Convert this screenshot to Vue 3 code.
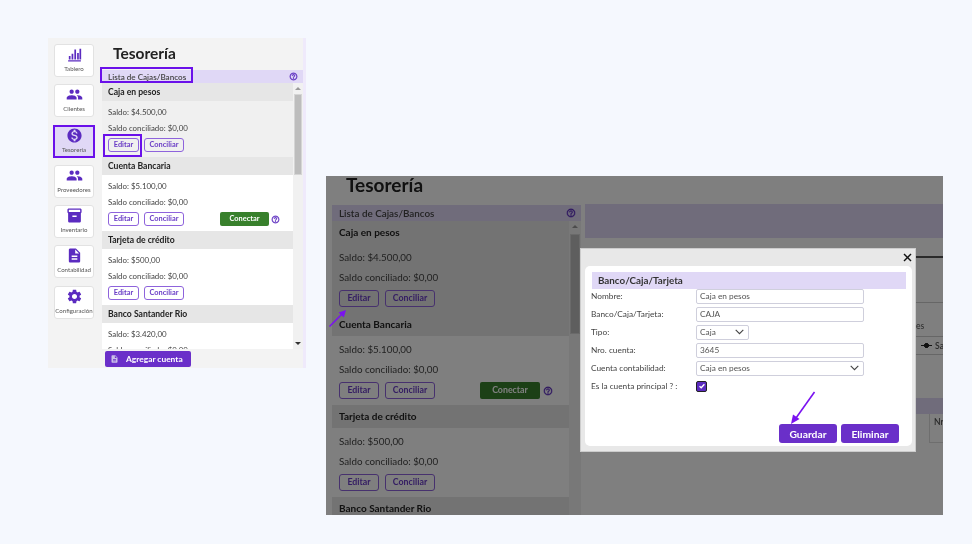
<script setup>
const icons = {
  chart: 'M3 20h18v2H3zM4 14h2.4v5H4zM7.9 11h2.4v8H7.9zM11.8 5h2.4v14h-2.4zM15.7 10h2.4v9h-2.4zM19 4h2.4v15H19z',
  people: 'M16 11c1.66 0 2.99-1.34 2.99-3S17.66 5 16 5c-1.66 0-3 1.34-3 3s1.34 3 3 3zm-8 0c1.66 0 2.99-1.34 2.99-3S9.66 5 8 5C6.34 5 5 6.34 5 8s1.34 3 3 3zm0 2c-2.33 0-7 1.17-7 3.5V19h14v-2.5c0-2.33-4.67-3.5-7-3.5zm8 0c-.29 0-.62.02-.97.05 1.16.84 1.97 1.97 1.97 3.45V19h6v-2.5c0-2.33-4.67-3.5-7-3.5z',
  money: 'M12 2C6.48 2 2 6.48 2 12s4.48 10 10 10 10-4.48 10-10S17.52 2 12 2zm1.41 16.09V20h-2.67v-1.93c-1.71-.36-3.16-1.46-3.27-3.4h1.96c.1 1.05.82 1.87 2.65 1.87 1.96 0 2.4-.98 2.4-1.59 0-.83-.44-1.61-2.67-2.14-2.48-.6-4.18-1.62-4.18-3.67 0-1.72 1.39-2.84 3.11-3.21V4h2.67v1.95c1.86.45 2.79 1.86 2.85 3.39H14.3c-.05-1.11-.64-1.87-2.22-1.87-1.5 0-2.4.68-2.4 1.64 0 .84.65 1.39 2.67 1.91s4.18 1.39 4.18 3.91c-.01 1.83-1.38 2.83-3.12 3.16z',
  box: 'M20 2H4c-1 0-2 .9-2 2v3.01c0 .72.43 1.34 1 1.69V20c0 1.1 1.1 2 2 2h14c.9 0 2-.9 2-2V8.7c.57-.35 1-.97 1-1.69V4c0-1.1-1-2-2-2zm-5 12H9v-2h6v2zm5-7H4V4h16v3z',
  doc: 'M14 2H6c-1.1 0-1.99.9-1.99 2L4 20c0 1.1.89 2 1.99 2H18c1.1 0 2-.9 2-2V8l-6-6zm2 16H8v-2h8v2zm0-4H8v-2h8v2zm-3-5V3.5L18.5 9H13z',
  gear: 'M19.14 12.94c.04-.3.06-.61.06-.94 0-.32-.02-.64-.07-.94l2.03-1.58c.18-.14.23-.41.12-.61l-1.92-3.32c-.12-.22-.37-.29-.59-.22l-2.39.96c-.5-.38-1.03-.7-1.62-.94l-.36-2.54c-.04-.24-.24-.41-.48-.41h-3.84c-.24 0-.43.17-.47.41l-.36 2.54c-.59.24-1.13.57-1.62.94l-2.39-.96c-.22-.08-.47 0-.59.22L2.74 8.87c-.12.21-.08.47.12.61l2.03 1.58c-.05.3-.09.63-.09.94s.02.64.07.94l-2.03 1.58c-.18.14-.23.41-.12.61l1.92 3.32c.12.22.37.29.59.22l2.39-.96c.5.38 1.03.7 1.62.94l.36 2.54c.05.24.24.41.48.41h3.84c.24 0 .44-.17.47-.41l.36-2.54c.59-.24 1.13-.56 1.62-.94l2.39.96c.22.08.47 0 .59-.22l1.92-3.32c.12-.22.07-.47-.12-.61l-2.01-1.58zM12 15.6c-1.98 0-3.6-1.62-3.6-3.6s1.62-3.6 3.6-3.6 3.6 1.62 3.6 3.6-1.62 3.6-3.6 3.6z',
  help: 'M11 18h2v-2h-2v2zm1-16C6.48 2 2 6.48 2 12s4.48 10 10 10 10-4.48 10-10S17.52 2 12 2zm0 18c-4.41 0-8-3.59-8-8s3.59-8 8-8 8 3.59 8 8-3.59 8-8 8zm0-14c-2.21 0-4 1.79-4 4h2c0-1.1.9-2 2-2s2 .9 2 2c0 2-3 1.75-3 5h2c0-2.25 3-2.5 3-5 0-2.21-1.79-4-4-4z'
}

const navItems = [
  { label: 'Tablero', icon: icons.chart },
  { label: 'Clientes', icon: icons.people },
  { label: 'Tesorería', icon: icons.money, active: true },
  { label: 'Proveedores', icon: icons.people },
  { label: 'Inventario', icon: icons.box },
  { label: 'Contabilidad', icon: icons.doc },
  { label: 'Configuración', icon: icons.gear }
]

const accounts = [
  { name: 'Caja en pesos', saldo: '$4.500,00', selected: true },
  { name: 'Cuenta Bancaria', saldo: '$5.100,00', connect: true },
  { name: 'Tarjeta de crédito', saldo: '$500,00' },
  { name: 'Banco Santander Rio', saldo: '$3.420,00' }
]

const formRows = [
  { label: 'Nombre:', value: 'Caja en pesos' },
  { label: 'Banco/Caja/Tarjeta:', value: 'CAJA' },
  { label: 'Tipo:', value: 'Caja', select: true, small: true },
  { label: 'Nro. cuenta:', value: '3645' },
  { label: 'Cuenta contabilidad:', value: 'Caja en pesos', select: true }
]
</script>

<template>
  <div class="page">
    <!-- captura 1: listado -->
    <section class="shot shot--list">
      <aside class="sidebar">
        <a v-for="item in navItems" :key="item.label" class="nav-card" :class="{ 'nav-card--active': item.active }">
          <svg class="nav-card__icon" viewBox="0 0 24 24"><path :d="item.icon" /></svg>
          <span>{{ item.label }}</span>
        </a>
      </aside>
      <div class="main">
        <h1 class="title">Tesorería</h1>
        <div class="bar">
          <span>Lista de Cajas/Bancos</span>
          <svg class="help" viewBox="0 0 24 24"><path :d="icons.help" /></svg>
          <i class="mark mark--bar"></i>
        </div>
        <div class="list">
          <div class="items">
            <div v-for="(acc, i) in accounts" :key="acc.name" class="item" :class="{ 'item--selected': acc.selected }">
              <div class="item__head">{{ acc.name }}</div>
              <div class="item__body">
                <p>Saldo: {{ acc.saldo }}</p>
                <p>Saldo conciliado: $0,00</p>
                <div class="item__actions">
                  <button class="btn-outline">Editar<i v-if="i === 0" class="mark mark--edit"></i></button>
                  <button class="btn-outline btn-outline--wide">Conciliar</button>
                  <template v-if="acc.connect">
                    <button class="btn-connect">Conectar</button>
                    <svg class="help help--connect" viewBox="0 0 24 24"><path :d="icons.help" /></svg>
                  </template>
                </div>
              </div>
            </div>
          </div>
          <div class="scrollbar">
            <i class="arrow arrow--up"></i>
            <i class="thumb"></i>
            <i class="arrow arrow--down"></i>
          </div>
        </div>
        <div class="footer">
          <button class="btn-add">
            <svg viewBox="0 0 24 24"><path :d="icons.doc" /></svg>
            Agregar cuenta
          </button>
        </div>
      </div>
      <div class="edge"></div>
    </section>

    <!-- captura 2: modal de edicion -->
    <section class="shot shot--modal">
      <h1 class="title">Tesorería</h1>
      <div class="columns">
        <div class="left-col">
          <div class="bar">
            <span>Lista de Cajas/Bancos</span>
            <svg class="help" viewBox="0 0 24 24"><path :d="icons.help" /></svg>
          </div>
          <div class="list">
            <div class="items">
              <div v-for="acc in accounts" :key="acc.name" class="item" :class="{ 'item--selected': acc.selected }">
                <div class="item__head">{{ acc.name }}</div>
                <div class="item__body">
                  <p>Saldo: {{ acc.saldo }}</p>
                  <p>Saldo conciliado: $0,00</p>
                  <div class="item__actions">
                    <button class="btn-outline">Editar</button>
                    <button class="btn-outline btn-outline--wide">Conciliar</button>
                    <template v-if="acc.connect">
                      <button class="btn-connect">Conectar</button>
                      <svg class="help help--connect" viewBox="0 0 24 24"><path :d="icons.help" /></svg>
                    </template>
                  </div>
                </div>
              </div>
            </div>
            <div class="scrollbar">
              <i class="arrow arrow--up"></i>
              <i class="thumb"></i>
            </div>
          </div>
        </div>
        <div class="behind">
          <div class="behind__bar"></div>
          <div class="behind__rule"></div>
          <div class="behind__soft"></div>
          <div class="behind__note">es</div>
          <div class="behind__legend"><i class="dot"></i><span>Sa</span></div>
          <div class="behind__thead"></div>
          <div class="behind__cell"><span>Nr</span></div>
        </div>
      </div>

      <div class="backdrop"></div>

      <div class="modal">
        <button class="modal__close" aria-label="Close">
          <svg width="9" height="9" viewBox="0 0 9 9" stroke="#111" stroke-width="1.4" fill="none">
            <line x1="1" y1="1" x2="8" y2="8" />
            <line x1="8" y1="1" x2="1" y2="8" />
          </svg>
        </button>
        <div class="modal__content">
          <h2 class="modal__title">Banco/Caja/Tarjeta</h2>
          <div v-for="row in formRows" :key="row.label" class="form-row">
            <label>{{ row.label }}</label>
            <div class="field" :class="{ 'field--small': row.small }">
              <span>{{ row.value }}</span>
              <svg v-if="row.select" width="9" height="6" viewBox="0 0 9 6" fill="none" stroke="#444" stroke-width="1.1">
                <polyline points="0.7,0.8 4.5,4.6 8.3,0.8" />
              </svg>
            </div>
          </div>
          <div class="form-row">
            <label>Es la cuenta principal ? :</label>
            <div class="check">
              <svg width="8" height="8" viewBox="0 0 8 8" fill="none" stroke="#fff" stroke-width="1.3">
                <polyline points="1.5,4.2 3.2,5.8 6.4,2.2" />
              </svg>
            </div>
          </div>
          <div class="modal__actions">
            <button class="btn-solid">Guardar</button>
            <button class="btn-solid">Eliminar</button>
          </div>
        </div>
      </div>

      <svg class="pointer pointer--edit" width="20" height="20" viewBox="0 0 20 20">
        <line x1="1.5" y1="18.5" x2="14" y2="6" stroke="#7a12f0" stroke-width="1.6" />
        <polygon points="18,2 15.8,9.5 10.6,4.4" fill="#7a12f0" />
      </svg>
      <svg class="pointer pointer--save" width="28" height="36" viewBox="0 0 28 36">
        <line x1="25.5" y1="1" x2="7" y2="27" stroke="#7a12f0" stroke-width="1.6" />
        <polygon points="2,33 4,23.5 10.5,28" fill="#7a12f0" />
      </svg>
    </section>
  </div>
</template>

<style scoped>
.page {
  display: flex;
  align-items: flex-start;
  height: 544px;
  overflow: hidden;
  background: #f5f8fe;
  font-family: "Lato", "Noto Sans", sans-serif;
  color: #333;
}

p, h1, h2 { margin: 0; }
button { font-family: inherit; padding: 0; cursor: pointer; }
i { display: block; }

.shot {
  position: relative;
  flex: none;
  overflow: hidden;
  filter: blur(0.35px);
  --purple: #5b2bc0;
}

/* medidas de cada captura */
.shot--list {
  display: flex;
  width: 258px;
  height: 330px;
  margin: 38px 0 0 48px;
  background: #f3f3f3;
  --head-h: 18px;
  --body-h: 56px;
  --pad: 6px;
  --fs: 7.9px;
  --fs-head: 8.6px;
  --line: 16px;
  --btn-h: 14px;
  --btn-w: 31px;
  --btn-wide: 40px;
  --btn-gap: 5px;
  --btn-fs: 7.4px;
  --connect-w: 49px;
  --connect-ml: 31px;
  --help: 9px;
  --help-ml: -3px;
  --sb-w: 10px;
}

.shot--modal {
  width: 617px;
  height: 339px;
  margin: 176px 0 0 20px;
  padding-left: 6px;
  box-sizing: border-box;
  background: #fff;
  --head-h: 23px;
  --body-h: 69px;
  --pad: 7px;
  --fs: 9.8px;
  --fs-head: 10px;
  --line: 20px;
  --btn-h: 17px;
  --btn-w: 40px;
  --btn-wide: 50px;
  --btn-gap: 6px;
  --btn-fs: 8.8px;
  --connect-w: 60px;
  --connect-ml: 39px;
  --help: 10px;
  --help-ml: -3px;
  --sb-w: 12px;
}

/* sidebar */
.sidebar {
  display: flex;
  flex-direction: column;
  gap: 7.3px;
  width: 54px;
  flex: none;
  padding: 6px 0 0 6px;
  box-sizing: border-box;
}

.nav-card {
  display: flex;
  flex-direction: column;
  align-items: center;
  width: 40px;
  height: 33px;
  box-sizing: border-box;
  padding-top: 1px;
  background: #fff;
  border: 1px solid #e2e2e2;
  border-radius: 3px;
  font-size: 6.1px;
  color: #555;
  white-space: nowrap;
}

.nav-card--active {
  width: 42px;
  margin-left: -1px;
  background: #e0d8f6;
  border: 2px solid #6a10ea;
  border-radius: 0;
  padding-top: 0;
}

.nav-card__icon {
  width: 17px;
  height: 17px;
  margin-bottom: 2px;
  fill: var(--purple);
  flex: none;
}

/* columna principal */
.main {
  display: flex;
  flex-direction: column;
  width: 201px;
  flex: none;
}

.title {
  font-weight: 700;
  color: #222;
}

.shot--list .title {
  height: 32px;
  padding-left: 11px;
  font-size: 15.5px;
  line-height: 31px;
}

.shot--modal .title {
  height: 29px;
  padding-left: 14px;
  font-size: 19px;
  line-height: 17px;
}

.bar {
  position: relative;
  display: flex;
  align-items: center;
  justify-content: space-between;
  padding: 0 5px 0 var(--pad);
  background: #e0d8f6;
  font-weight: 600;
  color: #444;
}

.shot--list .bar { height: 13px; font-size: 8.1px; }
.shot--modal .bar { height: 16px; font-size: 9.9px; }

.help {
  width: var(--help);
  height: var(--help);
  fill: var(--purple);
  stroke: var(--purple);
  stroke-width: 0.8;
  flex: none;
}

.help--connect { margin-left: var(--help-ml); }

.mark {
  position: absolute;
  box-sizing: border-box;
  border: 2px solid #6a10ea;
}

.mark--bar { left: -2px; top: -3px; width: 93px; height: 16px; }
.mark--edit { left: -6.5px; top: -5.5px; width: 39px; height: 23px; }

.list {
  display: flex;
  overflow: hidden;
  background: #f1f1f1;
}

.shot--list .list { height: 266px; }
.shot--modal .list { height: 294px; }

.items { flex: 1; min-width: 0; }

.item__head {
  height: var(--head-h);
  line-height: var(--head-h);
  padding-left: var(--pad);
  background: #e6e6e6;
  font-size: var(--fs-head);
  font-weight: 700;
  color: #222;
}

.item__body {
  height: var(--body-h);
  box-sizing: border-box;
  padding: 3px 0 0 var(--pad);
  background: #fff;
  font-size: var(--fs);
  line-height: var(--line);
  color: #444;
}

.item--selected .item__body { background: #f0f0f0; }

.shot--modal .item--selected .item__body,
.shot--modal .item--selected .item__head { background: #e6e6e6; }

.item__actions {
  display: flex;
  align-items: center;
  gap: var(--btn-gap);
  margin-top: 2px;
}

.shot--modal .item__actions { margin-top: 3px; }

.btn-outline {
  position: relative;
  width: var(--btn-w);
  height: var(--btn-h);
  background: transparent;
  border: 1.5px solid #8e63dc;
  border-radius: 3px;
  color: #6a3dc6;
  font-size: var(--btn-fs);
  font-weight: 700;
  line-height: 1;
}

.btn-outline--wide { width: var(--btn-wide); }

.btn-connect {
  width: var(--connect-w);
  height: var(--btn-h);
  margin-left: var(--connect-ml);
  background: #38802c;
  border: none;
  border-radius: 2px;
  color: #fff;
  font-size: var(--btn-fs);
  font-weight: 700;
  line-height: 1;
}

.scrollbar {
  display: flex;
  flex-direction: column;
  align-items: center;
  width: var(--sb-w);
  flex: none;
}

.arrow {
  width: 0;
  height: 0;
  border-left: 3px solid transparent;
  border-right: 3px solid transparent;
}

.arrow--up { margin-top: 4px; border-bottom: 3px solid #999; }
.arrow--down { margin-top: 167px; border-top: 3px solid #333; }

.thumb {
  width: calc(var(--sb-w) - 2px);
  background: #bdbdbd;
  border: 1px solid #d5d5d5;
  box-sizing: border-box;
}

.shot--list .thumb { height: 81px; margin-top: 4px; }
.shot--modal .thumb { height: 100px; margin-top: 6px; }

.footer { height: 19px; padding: 2px 0 0 3px; box-sizing: border-box; }

.btn-add {
  display: flex;
  align-items: center;
  gap: 7px;
  width: 86px;
  height: 16px;
  padding-left: 5px;
  box-sizing: border-box;
  background: #6a2fc9;
  border: none;
  border-radius: 2px;
  color: #fff;
  font-size: 8.4px;
  font-weight: 700;
}

.btn-add svg { width: 9px; height: 10px; fill: #c9bfe8; }

.edge {
  width: 3px;
  height: 100%;
  background: #efeafb;
}

/* captura 2 */
.columns { display: flex; gap: 4px; }
.left-col { width: 249px; flex: none; }

.behind {
  flex: 1;
  margin-top: -1px;
  font-size: 8.6px;
  color: #555;
}

.behind__bar { height: 34px; background: #e0d8f6; }
.behind__rule { height: 2px; margin-top: 18px; background: #555; }
.behind__soft { height: 1px; margin-top: 44px; background: #ccc; }
.behind__note { height: 10px; margin-top: 18px; padding-left: 331px; line-height: 10px; }

.behind__legend {
  display: flex;
  align-items: center;
  gap: 3px;
  height: 17px;
  margin-top: 5px;
  padding-left: 336px;
  border-top: 1px solid #ccc;
  border-bottom: 1px solid #ccc;
  font-weight: 600;
}

.dot {
  width: 11px;
  height: 5px;
  background: radial-gradient(circle, #222 2.2px, transparent 2.7px), linear-gradient(transparent 2px, #222 2px, #222 3px, transparent 3px);
}

.behind__thead { height: 16px; margin-top: 43px; background: #e0d8f6; }

.behind__cell {
  height: 28px;
  margin-left: 344px;
  padding-left: 4px;
  border-left: 1px solid #ddd;
  border-bottom: 1px solid #ddd;
  line-height: 16px;
  font-weight: 600;
}

.backdrop {
  position: absolute;
  inset: 0;
  background: rgba(0, 0, 0, 0.5);
}

.modal {
  position: absolute;
  left: 254px;
  top: 72px;
  display: flex;
  width: 336px;
  height: 204px;
  box-sizing: border-box;
  padding: 17px 3px 5px 4px;
  background: #e8e8e8;
  border: 1px solid #ccc;
}

.modal__close {
  position: absolute;
  top: 4px;
  right: 3px;
  display: flex;
  background: none;
  border: none;
}

.modal__content {
  display: flex;
  flex-direction: column;
  flex: 1;
  padding: 6px 6px 3px 7px;
  background: #fff;
  border-radius: 5px;
}

.modal__title {
  height: 17px;
  margin-bottom: -2px;
  padding-left: 6px;
  background: #e0d8f6;
  font-size: 9.8px;
  font-weight: 700;
  line-height: 17px;
  color: #333;
}

.form-row {
  display: flex;
  align-items: center;
  height: 18px;
  margin-left: -1px;
  font-size: 8.3px;
  color: #444;
}

.form-row label { width: 105px; flex: none; }

.field {
  display: flex;
  align-items: center;
  justify-content: space-between;
  width: 168px;
  height: 15px;
  box-sizing: border-box;
  padding: 0 4px 0 3px;
  background: #fff;
  border: 1px solid #cfcfdc;
  border-radius: 2px;
  color: #555;
}

.field--small { width: 53px; }

.check {
  display: flex;
  align-items: center;
  justify-content: center;
  width: 11px;
  height: 11px;
  box-sizing: border-box;
  background: #5b2bc0;
  border: 1px solid #222;
  border-radius: 2px;
}

.modal__actions {
  display: flex;
  justify-content: flex-end;
  gap: 4px;
  margin-top: auto;
  padding-right: 7px;
}

.btn-solid {
  width: 58px;
  height: 19px;
  background: #6a2fc9;
  border: none;
  border-radius: 3px;
  color: #fff;
  font-size: 10.3px;
  font-weight: 700;
}

.pointer { position: absolute; }
.pointer--edit { left: 2px; top: 132px; }
.pointer--save { left: 463px; top: 215px; }
</style>

<style>
html, body { background: #f5f8fe; overflow: hidden; }
</style>
